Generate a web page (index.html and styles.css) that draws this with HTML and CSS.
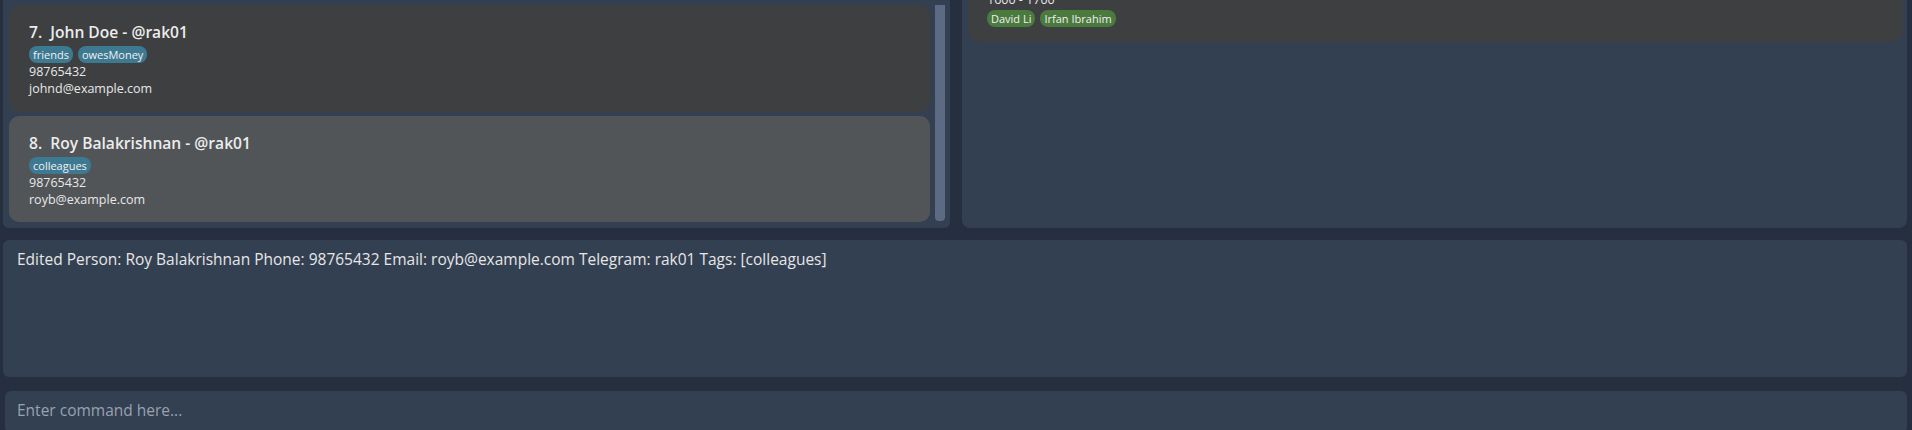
FILE: index.html
```html
<!DOCTYPE html>
<html lang="en">
<head>
<meta charset="utf-8">
<title>AddressBook</title>
<link rel="stylesheet" href="styles.css">
</head>
<body>
<div class="app">
  <div class="top">
    <div class="list-panel">
      <div class="cards">
        <div class="card">
          <div class="title">7.&nbsp; John Doe - @rak01</div>
          <div class="tags">
            <span class="tag">friends</span>
            <span class="tag">owesMoney</span>
          </div>
          <div class="line">98765432</div>
          <div class="line">johnd@example.com</div>
        </div>
        <div class="card selected">
          <div class="title">8.&nbsp; Roy Balakrishnan - @rak01</div>
          <div class="tags">
            <span class="tag">colleagues</span>
          </div>
          <div class="line">98765432</div>
          <div class="line">royb@example.com</div>
        </div>
      </div>
      <div class="scrollbar"><div class="thumb"></div></div>
    </div>
    <div class="side-panel">
      <div class="event-card">
        <div class="line">1600 - 1700</div>
        <div class="tags">
          <span class="tag green">David Li</span>
          <span class="tag green">Irfan Ibrahim</span>
        </div>
      </div>
    </div>
  </div>
  <div class="result">Edited Person: Roy Balakrishnan Phone: 98765432 Email: royb@example.com Telegram: rak01 Tags: [colleagues]</div>
  <div class="command"><input class="command-input" type="text" placeholder="Enter command here..."></div>
</div>
</body>
</html>
```
FILE: styles.css
```css
html, body {
  margin: 0;
  padding: 0;
  background: #262f3f;
  overflow: hidden;
}
body {
  width: 1912px;
  height: 430px;
  font-family: "Open Sans", "Noto Sans", sans-serif;
  color: #e6e6e6;
}
.app {
  display: flex;
  flex-direction: column;
  padding: 0 5px 0 3px;
  height: 430px;
  box-sizing: border-box;
}
.top {
  display: flex;
  gap: 12px;
  height: 228px;
  flex-shrink: 0;
}
.list-panel {
  width: 947px;
  background: #334052;
  border-radius: 0 0 6px 6px;
  display: flex;
  padding: 5px 5px 6px 6px;
  box-sizing: border-box;
  gap: 5px;
}
.cards {
  flex: 1;
  display: flex;
  flex-direction: column;
  gap: 4px;
}
.card {
  background: #3e3f41;
  border-radius: 10px;
  height: 107px;
  box-sizing: border-box;
  padding: 16px 20px 0 20px;
}
.card.selected {
  background: #515558;
  height: 106px;
}
.title {
  font-size: 15.6px;
  font-weight: 600;
  line-height: 23px;
  color: #ececec;
  white-space: pre;
}
.tags {
  display: flex;
  gap: 5px;
  margin-top: 2px;
  height: 17px;
}
.tag {
  background: #3d7a92;
  color: #f0f0f0;
  font-size: 11px;
  line-height: 17px;
  padding: 0 4px;
  border-radius: 8px;
}
.tag.green {
  background: #4a7a3e;
}
.line {
  font-size: 12.5px;
  line-height: 17px;
  color: #e8e8e8;
}
.scrollbar {
  width: 10px;
  margin-bottom: 1px;
}
.thumb {
  height: 100%;
  background: #5c6a84;
  border-radius: 0 0 4px 4px;
}
.side-panel {
  flex: 1;
  background: #334052;
  border-radius: 0 0 8px 8px;
  padding: 0 4px 0 6px;
  overflow: hidden;
}
.event-card {
  background: #3e3f41;
  border-radius: 0 0 10px 10px;
  margin-top: -9px;
  padding: 0 20px 15px 19px;
}
.result {
  margin-top: 12px;
  height: 137px;
  flex-shrink: 0;
  background: #334052;
  border-radius: 6px;
  box-sizing: border-box;
  padding: 8px 14px;
  font-size: 15.5px;
  line-height: 23px;
  color: #e6e6e6;
}
.command {
  margin-top: 14px;
  margin-left: 2px;
  flex-shrink: 0;
}
.command-input {
  display: block;
  width: 100%;
  height: 42px;
  box-sizing: border-box;
  background: #334052;
  border: none;
  border-radius: 6px;
  padding: 0 12px 4px 12px;
  font-family: "Open Sans", "Noto Sans", sans-serif;
  font-size: 15.5px;
  color: #e6e6e6;
  outline: none;
}
.command-input::placeholder {
  color: #98a2b0;
}
```
